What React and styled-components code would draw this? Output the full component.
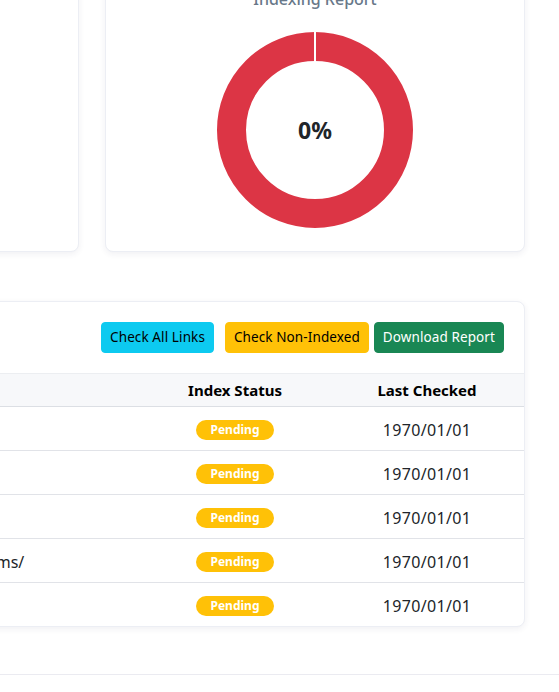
import React from "react";
import styled, { createGlobalStyle } from "styled-components";

const GlobalStyle = createGlobalStyle`
  html, body {
    margin: 0;
    padding: 0;
    overflow: hidden;
    background: #ffffff;
  }
  body {
    font-family: "Noto Sans", "Open Sans", sans-serif;
    color: #212529;
    font-size: 16px;
  }
`;

const Page = styled.main`
  width: 866px;
  margin: -34px 0 0 -341px;
  display: flex;
  flex-direction: column;
  gap: 49px;
`;

const TopRow = styled.section`
  display: flex;
  gap: 26px;
`;

const Card = styled.div`
  box-sizing: border-box;
  background: #fff;
  border: 1px solid #eceef4;
  border-radius: 8px;
  box-shadow: 0 2px 6px rgba(40, 44, 90, 0.07);
`;

const ChartCard = styled(Card)`
  flex: 0 0 420px;
  padding: 20px 20px 23px;
  display: flex;
  flex-direction: column;
  align-items: center;
`;

const SummaryCard = styled(Card)`
  flex: 0 0 420px;
  padding: 20px;
`;

const CardTitle = styled.h5`
  margin: 0 0 21px;
  font-size: 16px;
  line-height: 24px;
  font-weight: 500;
  color: #687889;
  text-align: ${(p) => p.$align || "center"};
`;

const StatLine = styled.p`
  margin: 0 0 8px;
  font-size: 14px;
  color: #495057;
`;

const Donut = styled.div`
  position: relative;
  width: 196px;
  height: 196px;
`;

const DonutLabel = styled.div`
  position: absolute;
  inset: 0;
  display: flex;
  align-items: center;
  justify-content: center;
  font-size: 23px;
  font-weight: 700;
  color: #212529;
`;

const TableCard = styled(Card)`
  overflow: hidden;
`;

const Toolbar = styled.div`
  display: flex;
  align-items: center;
  padding: 20px;
`;

const ToolbarTitle = styled.h5`
  margin: 0 auto 0 0;
  font-size: 16px;
  font-weight: 500;
  color: #687889;
`;

const palette = {
  info: { bg: "#0dcaf0", fg: "#000" },
  warning: { bg: "#ffc107", fg: "#000" },
  success: { bg: "#198754", fg: "#fff" },
};

const Button = styled.button`
  box-sizing: border-box;
  margin-left: ${(p) => p.$gap || 0}px;
  padding: 4px 8px;
  border: 1px solid ${(p) => palette[p.$tone].bg};
  border-radius: 4px;
  background: ${(p) => palette[p.$tone].bg};
  color: ${(p) => palette[p.$tone].fg};
  font-family: inherit;
  font-size: 13.5px;
  letter-spacing: 0.1px;
  line-height: 21px;
  cursor: pointer;
`;

const Table = styled.table`
  width: 100%;
  border-collapse: collapse;
  table-layout: fixed;
`;

const HeadCell = styled.th`
  padding: 6px 8px;
  line-height: 20px;
  background: #f7f8fa;
  border-top: 1px solid #eceef1;
  border-bottom: 1px solid #dcdfe4;
  font-size: 15px;
  font-weight: 700;
  color: #000;
  text-align: ${(p) => p.$align || "center"};
`;

const Row = styled.tr`
  & + & td {
    border-top: 1px solid #e1e3e8;
  }
`;

const Cell = styled.td`
  padding: 13px 8px 9px;
  height: 21px;
  line-height: 21px;
  font-size: 16px;
  color: #212529;
  letter-spacing: ${(p) => (p.$date ? "0.35px" : "normal")};
  text-align: ${(p) => p.$align || "center"};
  vertical-align: top;
  white-space: nowrap;
  overflow: hidden;
`;

const Badge = styled.span`
  display: inline-block;
  height: 20px;
  padding: 0 15px;
  border-radius: 10px;
  background: #ffc107;
  color: #fff;
  font-size: 12px;
  font-weight: 700;
  line-height: 20px;
  letter-spacing: normal;
  vertical-align: top;
`;

const Footer = styled.footer`
  margin-top: 47px;
  height: 40px;
  border-top: 1px solid #ebebf1;
`;

const site = "http://www.thebrightleafstudio.com";
const links = [
  `${site}/`,
  `${site}/about/`,
  `${site}/blog/`,
  `${site}/programs/`,
  `${site}/faq/`,
];

function DonutChart({ percent }) {
  return (
    <Donut>
      <svg width="196" height="196" viewBox="0 0 196 196">
        <circle cx="98" cy="98" r="83.5" fill="none" stroke="#dc3545" strokeWidth="29" />
        <line x1="98" y1="0" x2="98" y2="30" stroke="#fff" strokeWidth="2" />
      </svg>
      <DonutLabel>{percent}%</DonutLabel>
    </Donut>
  );
}

export default function App() {
  return (
    <>
      <GlobalStyle />
      <Page>
        <TopRow>
          <SummaryCard>
            <CardTitle $align="left">Website Overview</CardTitle>
            <StatLine>Total links: 5</StatLine>
            <StatLine>Indexed: 0</StatLine>
            <StatLine>Pending: 5</StatLine>
          </SummaryCard>
          <ChartCard>
            <CardTitle>Indexing Report</CardTitle>
            <DonutChart percent={0} />
          </ChartCard>
        </TopRow>

        <TableCard>
          <Toolbar>
            <ToolbarTitle>Links</ToolbarTitle>
            <Button $tone="info">Check All Links</Button>
            <Button $tone="warning" $gap={11}>Check Non-Indexed</Button>
            <Button $tone="success" $gap={5}>Download Report</Button>
          </Toolbar>
          <Table>
            <colgroup>
              <col />
              <col style={{ width: 190 }} />
              <col style={{ width: 194 }} />
            </colgroup>
            <thead>
              <tr>
                <HeadCell $align="left">URL</HeadCell>
                <HeadCell>Index Status</HeadCell>
                <HeadCell>Last Checked</HeadCell>
              </tr>
            </thead>
            <tbody>
              {links.map((url) => (
                <Row key={url}>
                  <Cell $align="left">{url}</Cell>
                  <Cell>
                    <Badge>Pending</Badge>
                  </Cell>
                  <Cell $date>1970/01/01</Cell>
                </Row>
              ))}
            </tbody>
          </Table>
        </TableCard>
      </Page>
      <Footer />
    </>
  );
}
